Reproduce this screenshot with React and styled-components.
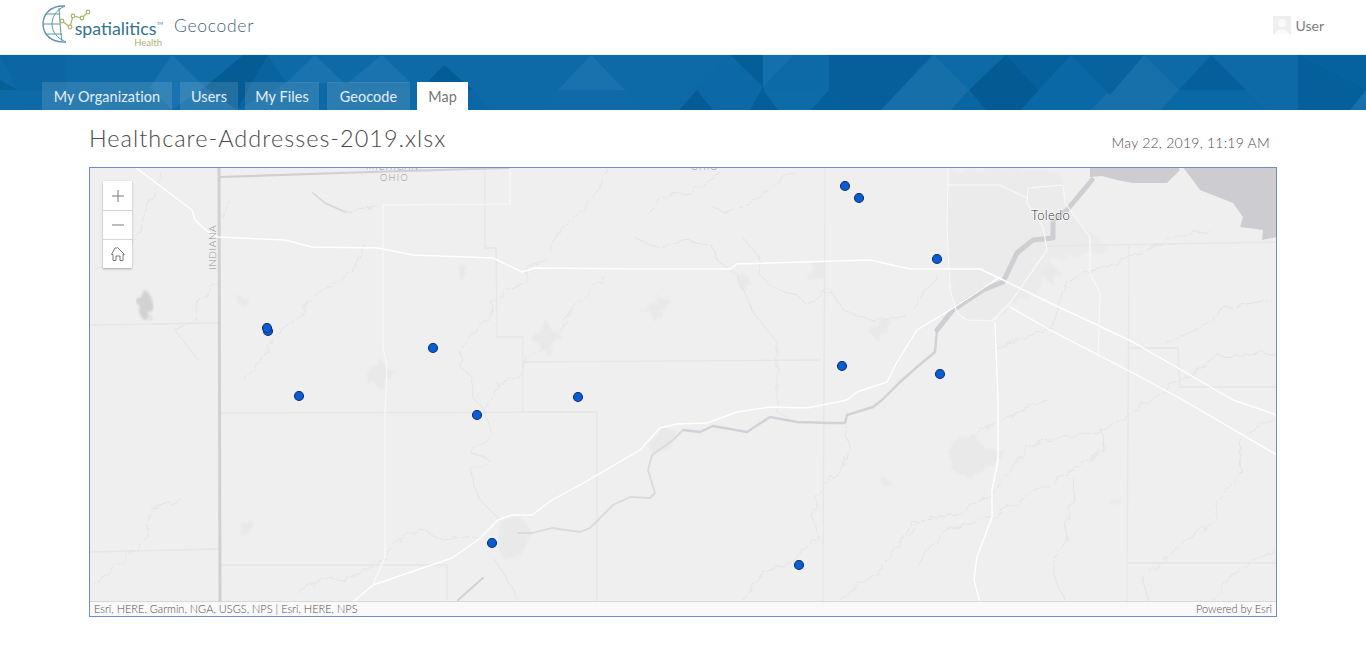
import React from 'react';
import styled, { createGlobalStyle } from 'styled-components';

const GlobalStyle = createGlobalStyle`
  html, body {
    margin: 0;
    padding: 0;
    background: #fff;
    font-family: Lato, "Open Sans", sans-serif;
  }
`;

const Header = styled.header`
  height: 55px;
  box-sizing: border-box;
  padding: 0 42px;
  display: flex;
  align-items: center;
  justify-content: space-between;
  border-bottom: 1px solid #e4f6fb;
`;

const Brand = styled.div`
  display: flex;
  align-items: flex-start;
  height: 54px;
`;

const LogoMark = styled.svg`
  width: 50px;
  height: 42px;
  margin: 4px -17px 0 0;
  flex: none;
`;

const LogoWords = styled.div`
  width: 88px;
  display: flex;
  flex-direction: column;
  align-items: flex-end;
  margin-top: 17px;
`;

const LogoName = styled.div`
  font-size: 17.8px;
  line-height: 22px;
  color: #35718f;
  white-space: nowrap;

  & sup {
    font-size: 4px;
    line-height: 0;
    vertical-align: 10px;
    margin-left: 0.5px;
  }
`;

const LogoSub = styled.div`
  font-size: 9.5px;
  line-height: 10px;
  color: #a9b36e;
  margin: -1px 1px 0 0;
`;

const ProductName = styled.div`
  font-size: 17.5px;
  font-weight: 300;
  line-height: 24px;
  letter-spacing: 0.7px;
  color: #3f6576;
  margin: 14px 0 0 11px;
`;

const UserArea = styled.div`
  display: flex;
  align-items: center;
  gap: 4px;
  margin-bottom: 4px;
  font-size: 14px;
  color: #7d7d7d;
`;

const Avatar = styled.svg`
  width: 18px;
  height: 18px;
  display: block;
`;

const Banner = styled.nav`
  position: relative;
  height: 55px;
  background: #0e6aa7;
  overflow: hidden;
  display: flex;
  align-items: flex-end;
  padding-left: 42px;
`;

const BannerArt = styled.svg`
  position: absolute;
  left: 0;
  top: 0;
  width: 1366px;
  height: 55px;
`;

const Tab = styled.div`
  position: relative;
  width: ${(p) => p.$width}px;
  margin-right: ${(p) => p.$gap}px;
  height: 28px;
  line-height: 29px;
  text-align: center;
  font-size: 14.4px;
  letter-spacing: 0.1px;
  color: ${(p) => (p.$active ? '#777' : '#e6f0f6')};
  background: ${(p) => (p.$active ? '#fff' : 'rgba(255, 255, 255, 0.12)')};
`;

const Content = styled.main`
  margin: 0 89px;
`;

const TitleRow = styled.div`
  height: 57px;
  display: flex;
  align-items: center;
  justify-content: space-between;
`;

const Title = styled.h1`
  margin: 0 0 2px;
  font-size: 23.5px;
  font-weight: 300;
  letter-spacing: 1px;
  color: #4a4a4a;
`;

const Stamp = styled.div`
  font-size: 14px;
  font-weight: 300;
  letter-spacing: 0.24px;
  color: #4c4c4c;
  margin: 8px 7px 0 0;
`;

const MapFrame = styled.div`
  position: relative;
  height: 450px;
  box-sizing: border-box;
  border: 1px solid #6d8fc6;
  overflow: hidden;
  background: #efeff0;
`;

const MapArt = styled.svg`
  display: block;
  width: 1186px;
  height: 448px;
`;

const ZoomControl = styled.div`
  position: absolute;
  left: 13px;
  top: 13px;
  width: 29px;
  background: #fff;
  box-shadow: 0 1px 2px rgba(0, 0, 0, 0.3);
`;

const ZoomButton = styled.div`
  height: 29px;
  display: flex;
  align-items: center;
  justify-content: center;
  color: #7a7a7a;
  box-sizing: border-box;
  border-top: ${(p) => (p.$first ? 'none' : '1px solid #d6d6d6')};
`;

const Attribution = styled.div`
  position: absolute;
  left: 0;
  right: 0;
  bottom: 0;
  height: 15px;
  box-sizing: border-box;
  padding: 0 4px 2px;
  display: flex;
  justify-content: space-between;
  align-items: center;
  font-size: 11px;
  font-weight: 300;
  color: #4e4e4e;
  background: rgba(255, 255, 255, 0.62);
  border-top: 1px solid #d8d8da;
`;

const banner = [
  ['0,80 18,90 0,90', '#075f99'],
  ['0,55 67,55 67,90 18,90', '#0c66a3'],
  ['172,55 205,87 172,110 150,87', '#1a73ae'],
  ['243,55 268,55 237,110 205,87', '#055c95'],
  ['315,55 344,83 286,83', '#1a73ae'],
  ['382,55 411,83 348,83', '#1a73ae'],
  ['268,55 286,83 237,110', '#09639f'],
  ['444,65 473,90 420,90', '#045c96'],
  ['420,90 473,90 490,110 420,110', '#0a66a4'],
  ['591,55 625,90 558,90', '#1872ae'],
  ['558,90 625,90 640,110 545,110', '#1069a8'],
  ['700,87 679,110 700,110', '#075f99'],
  ['680,110 697,90 713,110', '#055b94'],
  ['730,55 763,55 763,87', '#055e98'],
  ['763,55 794,55 763,87', '#1470ac'],
  ['713,110 697,90 730,55 763,87 750,110', '#0c68a6'],
  ['763,87 778,110 750,110', '#055e98'],
  ['763,90 829,90 842,110 778,110', '#0d6ba8'],
  ['829,55 932,55 881,110 842,110 829,90', '#065f9b'],
  ['829,90 811,110 842,110', '#05609a'],
  ['934,55 969,90 951,110 881,110', '#176faa'],
  ['969,90 1006,55 1039,90 1021,110 986,110', '#045a92'],
  ['969,90 986,110 951,110', '#0a65a3'],
  ['1006,55 1071,55 1039,90', '#06609b'],
  ['1039,90 1071,55 1110,95 1091,110 1021,110', '#0b68a6'],
  ['1144,55 1179,90 1161,110 1091,110', '#1870ab'],
  ['1071,55 1144,55 1110,95', '#07629e'],
  ['1211,55 1246,90 1179,90', '#065f9b'],
  ['1179,90 1246,90 1266,110 1161,110', '#0b68a6'],
  ['1298,55 1366,55 1366,90 1350,110 1298,110', '#045f9a'],
  ['1298,55 1366,55 1366,90', '#05629e'],
  ['1350,110 1366,90 1366,110', '#1570ac'],
];

const urban = [
  '950,172 1000,167 1060,172 1070,215 1100,240 1110,250 1050,260 1040,290 1010,305 990,321 960,318 950,290 947,230',
  '380,358 384,366 398,372 384,380 382,392 374,382 365,384 370,372',
  '545,318 552,330 560,334 552,342 548,356 540,344 530,340 541,330',
  '665,290 658,300 672,300 660,314 655,322 650,312 638,314 652,302',
  '743,272 752,282 743,292 736,282',
  '812,262 824,262 826,280 808,280',
  '880,318 892,322 882,334 876,342 872,334 866,332 876,326',
  '955,438 975,436 985,448 1006,452 996,466 980,470 970,478 952,470 950,452',
  '663,428 678,432 670,448 652,456 648,444',
  '882,478 890,480 894,488 882,486',
  '1110,500 1122,500 1122,504 1110,504',
  '236,296 248,298 246,306 238,304',
  '240,525 254,522 246,536 240,538',
  '461,264 467,268 464,276 463,284 460,272',
  '500,520 520,516 532,532 522,552 506,562 498,548',
  '1040,270 1050,262 1060,272 1050,284',
];

const lake = [
  '1183,167 1200,190 1233,203 1243,217 1240,227 1263,230 1262,240 1277,237 1277,167',
  '1090,167 1090,177 1102,176 1117,180 1133,183 1167,183 1180,170 1178,167',
];

const county = [
  '485,168 485,248 496,248 497,337 523,337 523,412',
  '523,362 820,360',
  '825,168 823,603',
  '221,413 597,412 597,603',
  '90,325 218,323',
  '90,552 218,549',
  '222,565 447,565 447,600',
  '1047,246 1277,242',
  '1129,246 1127,603',
  '1127,563 1277,563',
  '1129,348 1178,348 1180,387 1277,387',
];

const rivers = [
  '607,168 600,188 577,215 557,235 547,258 527,268 527,282 510,288 493,302 490,318 470,335 460,352 458,365 470,375 473,398 483,408 493,435 470,452 490,460 470,470 480,500 500,520',
  '603,275 600,282 573,308 560,332 527,358 523,372 503,382 490,402 487,408',
  '647,213 663,197 690,193 723,172',
  '713,207 723,212 757,198 793,170',
  '633,237 660,248 687,240 713,247 717,260 737,275 753,312 777,342 777,392 777,412 790,420',
  '742,237 758,255 760,275 773,288 797,295 807,305 823,292 833,293 843,310 873,320 907,315',
  '845,425 848,443 843,467 823,487 813,513 817,537 793,560 767,570 743,600',
  '920,522 880,570 840,600',
  '1047,400 1000,420 970,438',
  '900,543 913,523 960,513 990,497 1027,450 1043,440 1100,432 1117,423 1150,400 1207,366',
  '920,565 943,530 990,517 1033,493 1073,470 1103,450 1102,430',
  '1073,477 1075,500 1065,520 1067,540 1053,560 1053,573 1065,600',
  '1275,417 1250,433 1240,440 1242,473 1217,500 1217,520 1183,543 1150,573',
  '1275,550 1233,573 1213,600',
  '1143,577 1147,600',
  '1277,300 1217,310 1210,323 1167,343',
  '1277,353 1217,357 1193,373',
  '1210,230 1167,240 1127,257 1107,267 1083,273 1067,283 1052,327 993,350',
  '940,273 913,307',
  '162,170 155,193 135,237 128,250 95,270',
  '378,207 345,212',
  '232,203 222,217',
  '365,243 352,273 318,293 298,317 272,340 262,360 245,380',
  '218,280 198,300 195,320 175,330 198,360',
  '90,587 128,557 145,537 152,510 182,500',
  '298,593 325,578 348,580 378,563 398,543 418,528 442,540 478,537',
  '492,557 508,580 518,600',
];

const roads = [
  '135,167 192,210 195,220 208,232 218,237 285,240 312,247 378,248 413,255 493,258 522,272 535,268 640,269 730,269 737,264 870,260 910,269 980,269 997,277 1050,303 1093,323 1133,342 1233,400 1277,415',
  '1010,307 1050,330 1133,373 1183,400 1277,455',
  '353,602 373,585 452,558 478,540 498,520 512,515 532,515 552,500 580,485 640,450 660,428 677,424 707,423 737,412 770,407 807,408 847,400 857,392 887,382 897,362 917,330 950,310 1000,277',
  '995,323 998,400 998,460 992,490 992,517 977,557 974,580 980,603',
];

const thinRoads = [
  '510,168 510,204 383,205 383,348 387,365 385,412 385,557 372,587',
  '948,167 947,227 950,290 957,313 967,320 992,321 1010,303 1047,250 1043,227 1027,203 1028,188 1063,185 1065,203 1090,237 1090,273 1100,293 1098,357',
  '948,185 1000,185 1027,198',
];

// the river gets wider towards the lake
const maumeeWest =
  '518,533 532,533 552,528 580,532 590,528 613,505 630,497 650,498 655,493 648,470 652,455 673,440 683,430';
const maumeeMid =
  '683,430 700,432 713,426 747,432 770,417 797,422 830,423 845,423 847,415 873,407 882,400 900,382 917,367 935,352 937,330';
const maumeeEast =
  '937,330 953,310 983,290 1003,282 1017,253 1033,240 1053,238 1053,220 1067,210 1092,180';

const points = [
  [845, 186], [859, 198], [937, 259], [842, 366], [940, 374], [268, 331], [267, 328],
  [433, 348], [299, 396], [477, 415], [578, 397], [492, 543], [799, 565],
];

const tabs = [
  { name: 'My Organization', width: 130, gap: 8 },
  { name: 'Users', width: 58, gap: 7 },
  { name: 'My Files', width: 74, gap: 8 },
  { name: 'Geocode', width: 83, gap: 7 },
  { name: 'Map', width: 51, gap: 0 },
];

const App = () => (
  <>
    <GlobalStyle />
    <Header>
      <Brand>
        <LogoMark viewBox="42 4 50 42">
          <g fill="none" stroke="#5f95a6" strokeWidth="1">
            <path d="M65 6 C50 5 43 15 43 24 C43 34 51 43 66 42" strokeWidth="1.4" />
            <path d="M65 6 C56 10 52 17 52 24 C52 32 57 38 66 42" />
            <path d="M43 24 H60 M46 14 H60 M46 34 H62" />
            <path d="M59 8 C60 18 60 30 62 41" />
          </g>
          <g fill="none" stroke="#a9b36e" strokeWidth="1.2">
            <path d="M62 21 L70 27 L73 16 L82 18 L88 12" />
            <circle cx="62" cy="21" r="1.8" fill="#fff" />
            <circle cx="70" cy="27" r="1.8" fill="#fff" />
            <circle cx="73" cy="16" r="1.8" fill="#fff" />
            <circle cx="82" cy="18" r="1.8" fill="#fff" />
            <circle cx="88" cy="12" r="1.8" fill="#fff" />
          </g>
        </LogoMark>
        <LogoWords>
          <LogoName>spatialitics<sup>TM</sup></LogoName>
          <LogoSub>Health</LogoSub>
        </LogoWords>
        <ProductName>Geocoder</ProductName>
      </Brand>
      <UserArea>
        <Avatar viewBox="0 0 18 18">
          <rect width="18" height="18" fill="#efefef" />
          <circle cx="9" cy="7" r="4" fill="#fafafa" />
          <path d="M2 18 C3 12 15 12 16 18 Z" fill="#fafafa" />
        </Avatar>
        User
      </UserArea>
    </Header>
    <Banner>
      <BannerArt viewBox="0 55 1366 55">
        {banner.map(([pts, color]) => (
          <polygon key={pts} points={pts} fill={color} />
        ))}
      </BannerArt>
      {tabs.map((tab) => (
        <Tab key={tab.name} $width={tab.width} $gap={tab.gap} $active={tab.name === 'Map'}>
          {tab.name}
        </Tab>
      ))}
    </Banner>
    <Content>
      <TitleRow>
        <Title>Healthcare-Addresses-2019.xlsx</Title>
        <Stamp>May 22, 2019, 11:19 AM</Stamp>
      </TitleRow>
      <MapFrame>
        <MapArt viewBox="90 168 1186 448">
          <defs>
            <filter id="wiggle" x="-5%" y="-5%" width="110%" height="110%">
              <feTurbulence type="fractalNoise" baseFrequency="0.09" numOctaves="2" seed="4" />
              <feDisplacementMap in="SourceGraphic" scale="9" />
            </filter>
            <filter id="soft" x="-10%" y="-10%" width="120%" height="120%">
              <feTurbulence type="fractalNoise" baseFrequency="0.12" numOctaves="2" seed="9" result="n" />
              <feDisplacementMap in="SourceGraphic" in2="n" scale="10" />
              <feGaussianBlur stdDeviation="1.2" />
            </filter>
          </defs>
          <g filter="url(#soft)">
            {urban.map((pts, i) => (
              <polygon key={pts} points={pts} fill={i === 0 ? '#ebebec' : '#e9e9ea'} />
            ))}
          </g>
          {lake.map((pts) => (
            <polygon key={pts} points={pts} fill="#cdcdd1" />
          ))}
          <ellipse cx="145" cy="305" rx="7" ry="14" fill="#d2d2d5" filter="url(#soft)" />
          <g fill="none" strokeLinejoin="round" strokeLinecap="round">
            <g stroke="#e6e6e8" strokeWidth="1.3">
              {county.map((pts) => (
                <polyline key={pts} points={pts} />
              ))}
            </g>
            <g stroke="#e3e3e5" strokeWidth="1" filter="url(#wiggle)">
              {rivers.map((pts) => (
                <polyline key={pts} points={pts} />
              ))}
            </g>
            <polyline points="313,193 325,203 345,212" stroke="#d6d6d9" strokeWidth="1.5" />
            <polyline points="458,600 483,578" stroke="#d2d2d5" strokeWidth="2" />
            <polyline points={maumeeWest} stroke="#dadadd" strokeWidth="1.8" />
            <polyline points={maumeeMid} stroke="#d2d2d6" strokeWidth="2.4" />
            <polyline points={maumeeEast} stroke="#cfcfd3" strokeWidth="5" />
            <polyline points="219,167 220,602" stroke="#d0d0d1" strokeWidth="3" />
            <polyline points="219,177 370,172 510,168" stroke="#d0d0d1" strokeWidth="2.2" />
            <g stroke="#fff" strokeWidth="1.4">
              {roads.map((pts) => (
                <polyline key={pts} points={pts} />
              ))}
            </g>
            <g stroke="#f9f9fa" strokeWidth="1.1">
              {thinRoads.map((pts) => (
                <polyline key={pts} points={pts} />
              ))}
            </g>
          </g>
          <text x="0" y="0" transform="translate(216 270) rotate(-90)" fontSize="10" fontWeight="300" letterSpacing="0.6" fill="#8f8f92" fontFamily="Lato">INDIANA</text>
          <text x="380" y="181" fontSize="9" fontWeight="300" letterSpacing="1.4" fill="#8f8f92" fontFamily="Lato">OHIO</text>
          <text x="366" y="170" fontSize="9" fontWeight="300" letterSpacing="1" fill="#8f8f92" fontFamily="Lato">MICHIGAN</text>
          <text x="691" y="170" fontSize="9" fontWeight="300" letterSpacing="1" fill="#8f8f92" fontFamily="Lato">OHIO</text>
          <text x="1031" y="220" fontSize="13" fontWeight="300" letterSpacing="0.3" fill="#222" stroke="#fff" strokeWidth="1.5" paintOrder="stroke" fontFamily="Lato">Toledo</text>
          {points.map(([x, y]) => (
            <circle key={`${x}-${y}`} cx={x} cy={y} r="4.5" fill="#0a5cd6" stroke="#0c2f66" strokeWidth="1.1" />
          ))}
        </MapArt>
        <ZoomControl>
          <ZoomButton $first>
            <svg width="16" height="16" viewBox="0 0 16 16" fill="none" stroke="currentColor">
              <path d="M8 2 V14 M2 8 H14" />
            </svg>
          </ZoomButton>
          <ZoomButton>
            <svg width="16" height="16" viewBox="0 0 16 16" fill="none" stroke="currentColor">
              <path d="M2 8 H14" />
            </svg>
          </ZoomButton>
          <ZoomButton>
            <svg width="16" height="16" viewBox="0 0 16 16" fill="none" stroke="currentColor">
              <path d="M1.5 8.5 L5 2 H6.5 L7.5 1.5 L14.5 8.5 H13 V14.5 H10 V10 H6 V14.5 H3 V8.5 Z" />
            </svg>
          </ZoomButton>
        </ZoomControl>
        <Attribution>
          <span>Esri, HERE, Garmin, NGA, USGS, NPS | Esri, HERE, NPS</span>
          <span>Powered by Esri</span>
        </Attribution>
      </MapFrame>
    </Content>
  </>
);

export default App;
